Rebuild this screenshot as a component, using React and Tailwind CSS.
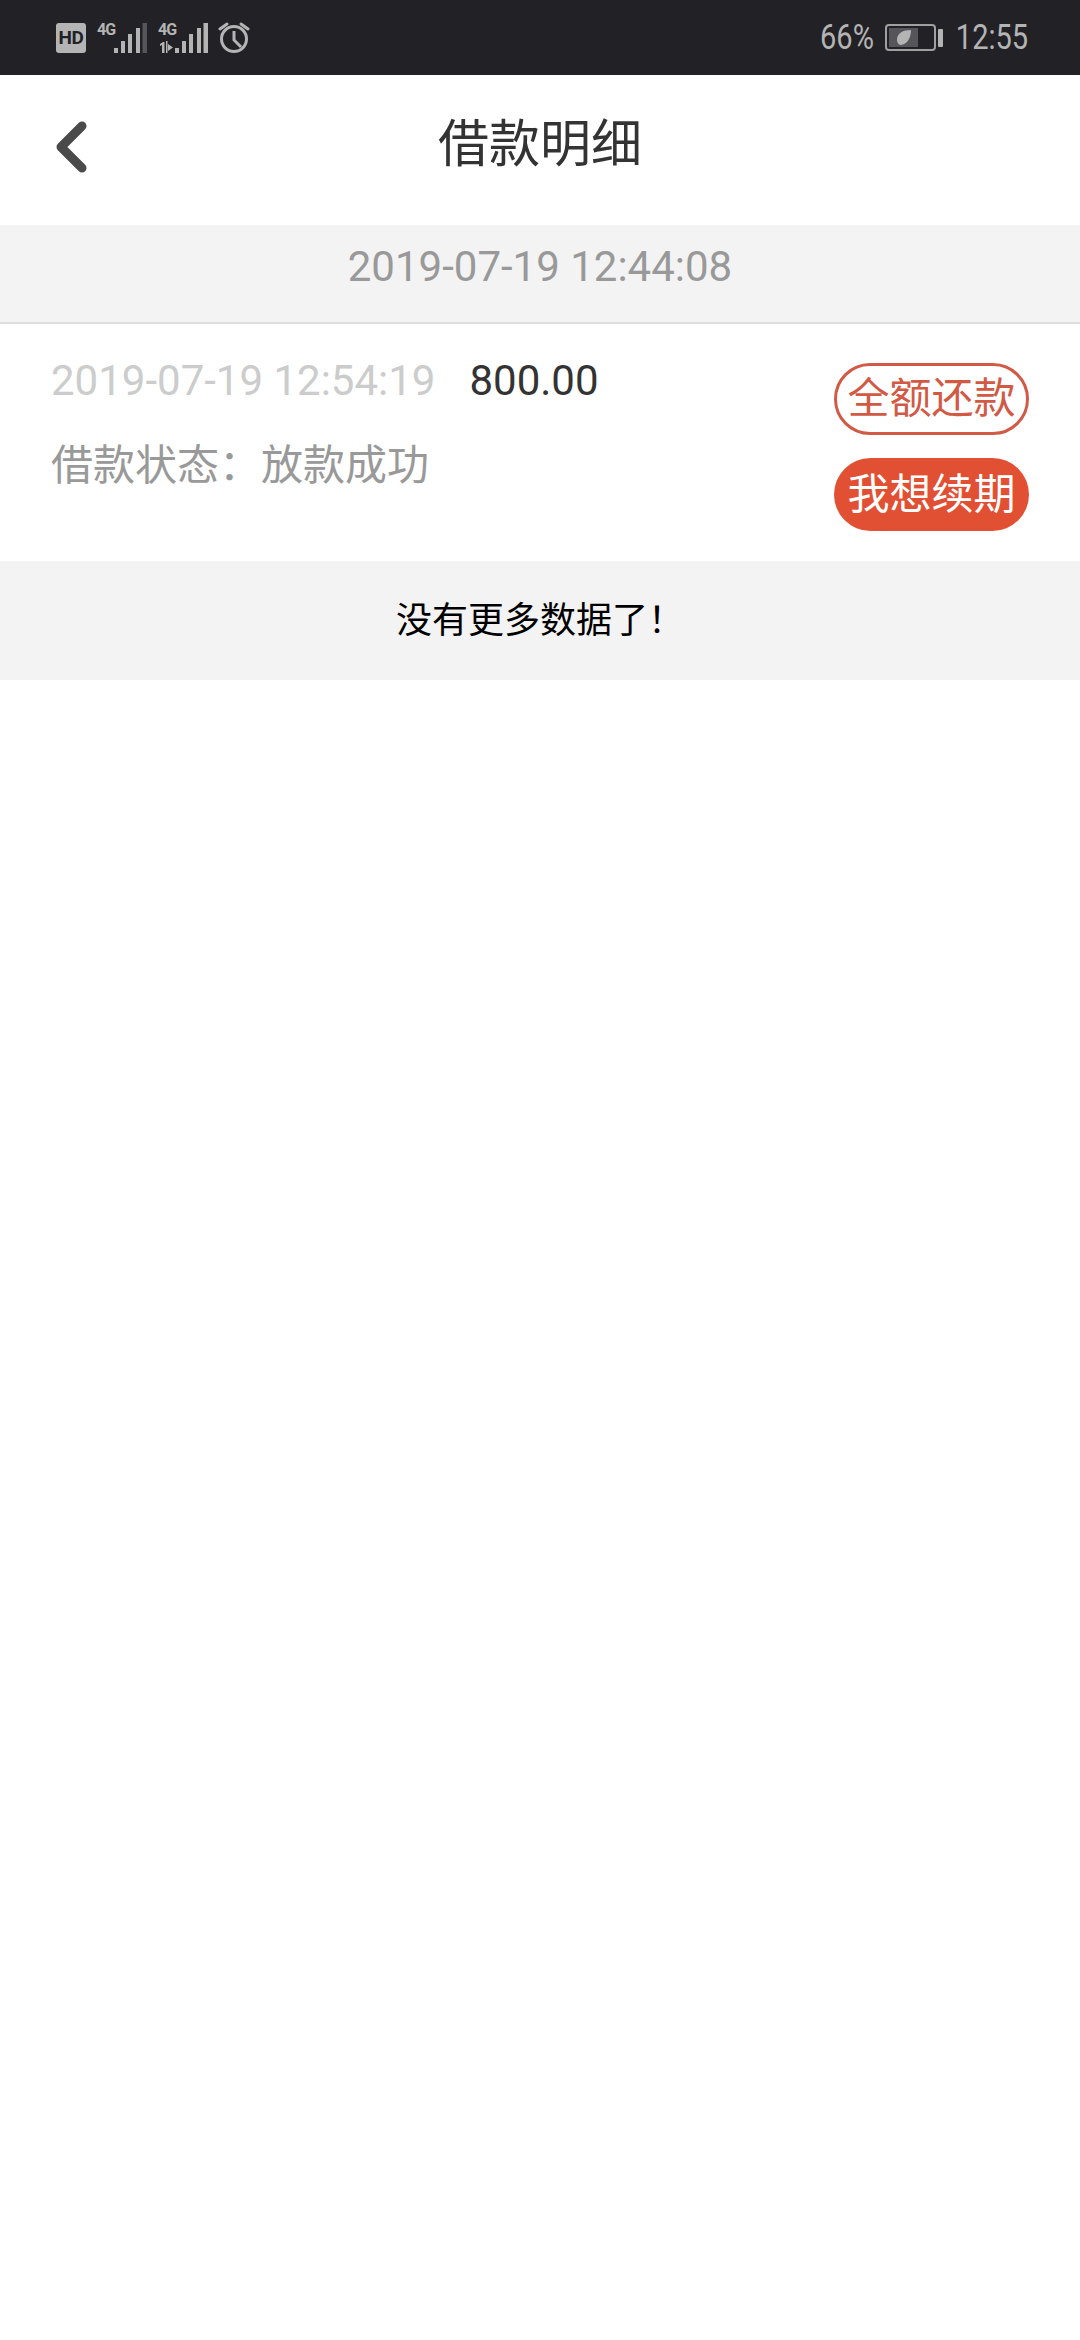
const FONT = { fontFamily: '"Roboto", "Noto Sans CJK SC", sans-serif' };

function SignalBars({ dimLast }) {
  return (
    <svg width="34" height="30" viewBox="0 0 34 30" fill="#b4b4b4">
      <rect x="1" y="25" width="4" height="5" />
      <rect x="8" y="18" width="4" height="12" />
      <rect x="15" y="11" width="4" height="19" />
      <rect x="23" y="5" width="4" height="25" />
      <rect x="29.5" y="0" width="4.5" height="30" fill={dimLast ? "#55555a" : "#b4b4b4"} />
    </svg>
  );
}

function StatusBar() {
  return (
    <div className="h-[75px] bg-[#222226] flex items-center justify-between pl-[56px] pr-[52px] text-[#b4b4b4]">
      <div className="flex items-center">
        <div className="w-[30px] h-[30px] mt-[1px] rounded-[3px] bg-[#b4b4b4] text-[#222226] text-[19px] font-bold tracking-[-0.5px] flex items-center justify-center">
          HD
        </div>
        <div className="relative w-[50px] h-[30px] ml-[11px]">
          <span className="absolute left-0 -top-[1px] text-[16px] leading-[16px] font-bold tracking-[-1px]">4G</span>
          <div className="absolute left-[16px] top-0">
            <SignalBars dimLast />
          </div>
        </div>
        <div className="relative w-[50px] h-[30px] ml-[11px]">
          <span className="absolute left-0 -top-[1px] text-[16px] leading-[16px] font-bold tracking-[-1px]">4G</span>
          <svg className="absolute left-0 top-[18px]" width="16" height="12" viewBox="0 0 16 12" fill="#b4b4b4">
            <path d="M2 3l3-2h1.5v11H4V4L2 5z" />
            <path d="M8 0h1.5v12H8zM10 3l5 3.5-5 3.5z" />
          </svg>
          <div className="absolute left-[16px] top-0">
            <SignalBars />
          </div>
        </div>
        <svg className="ml-[10px] -mt-[2px]" width="32" height="32" viewBox="0 0 32 32" fill="none" stroke="#b4b4b4" strokeWidth="3">
          <circle cx="16" cy="18" r="12.5" />
          <path d="M16 10v9l7 7" />
          <path d="M2 8l7-5M30 8l-7-5" strokeLinecap="round" />
        </svg>
      </div>
      <div className="flex items-center">
        <div className="w-[52px] flex justify-end">
          <span className="text-[35px] leading-none scale-x-[0.83] origin-right">66%</span>
        </div>
        <div className="flex items-center ml-[11px]">
          <div className="w-[51px] h-[27px] rounded-[4px] border-[2px] border-[#a0a0a0] p-[2px]">
            <div className="w-[29px] h-full bg-[#55555a] flex items-center justify-center">
              <svg width="16" height="15" viewBox="0 0 16 15" fill="#b4b4b4">
                <path d="M15 0C7 0 1 3 1 10c0 2 1 4 3 5 6 0 11-6 11-15z" />
              </svg>
            </div>
          </div>
          <div className="w-[5px] h-[18px] ml-[2px] bg-[#b4b4b4] rounded-[1px]" />
        </div>
        <div className="w-[73px] ml-[12px] flex justify-end">
          <span className="text-[35px] leading-none scale-x-[0.83] origin-right">12:55</span>
        </div>
      </div>
    </div>
  );
}

export default function App() {
  return (
    <div className="min-h-screen bg-white" style={FONT}>
      <StatusBar />

      <div className="relative h-[150px] flex items-center justify-center">
        <svg className="absolute left-[52px] top-[40px]" width="40" height="60" viewBox="0 0 40 60" fill="none" stroke="#4a4a4a" strokeWidth="9" strokeLinecap="round" strokeLinejoin="round">
          <path d="M30 11L9 32l21 21" />
        </svg>
        <h1 className="text-[51px] leading-none text-[#333333] -mt-[11px]">借款明细</h1>
      </div>

      <div className="h-[99px] bg-[#f3f3f3] border-b-[2px] border-[#dedede] flex justify-center pt-[17px] text-[42px] leading-[50px] text-[#999999]">
        2019-07-19 12:44:08
      </div>

      <div className="h-[237px] flex justify-between pl-[51px] pr-[51px]">
        <div>
          <div className="flex items-center mt-[32px] leading-[50px]">
            <span className="text-[42px] text-[#cccccc]">2019-07-19 12:54:19</span>
            <span className="text-[42px] text-[#333333] ml-[34px]">800.00</span>
          </div>
          <div className="mt-[35px] text-[42px] leading-[50px] text-[#999999]">借款状态：放款成功</div>
        </div>
        <div className="flex flex-col gap-[23px] pt-[39px]">
          <div className="w-[195px] h-[72px] rounded-full border-[3px] border-[#d25a45] text-[#d25a45] text-[42px] leading-none flex items-center justify-center">
            全额还款
          </div>
          <div className="w-[195px] h-[73px] rounded-full bg-[#e25034] text-white text-[42px] leading-none flex items-center justify-center">
            我想续期
          </div>
        </div>
      </div>

      <div className="h-[119px] bg-[#f3f3f3] flex items-center justify-center text-[36px] text-black">
        没有更多数据了！
      </div>
    </div>
  );
}
